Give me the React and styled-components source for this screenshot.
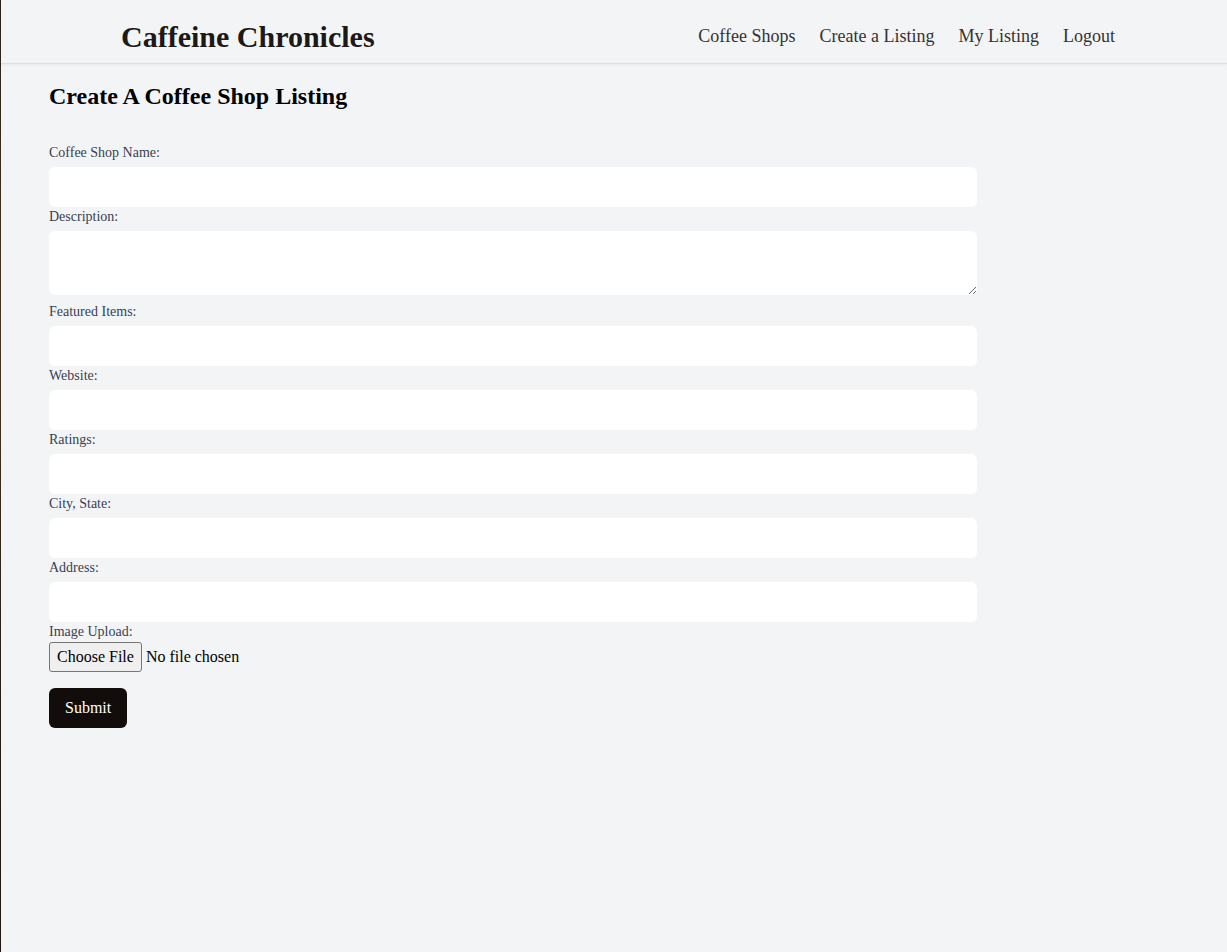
import React from 'react';
import styled, {createGlobalStyle} from 'styled-components';

const GlobalStyle = createGlobalStyle`
    html, body {
        margin:0;
        padding:0;
        background:#f3f4f6;
        font-family:"Liberation Serif", "Times New Roman", serif;
    }
    * { box-sizing:border-box; }
`

const fields = [
    {name:'name', label:'Coffee Shop Name:'},
    {name:'description', label:'Description:', multiline:true},
    {name:'featured', label:'Featured Items:'},
    {name:'website', label:'Website:'},
    {name:'ratings', label:'Ratings:'},
    {name:'location', label:'City, State:'},
    {name:'address', label:'Address:'},
];

const navLinks = ['Coffee Shops','Create a Listing','My Listing','Logout'];

export default function App(){

    function handleSubmit(e){
        e.preventDefault();
    }

    return (
        <Page>
            <GlobalStyle/>
            <Header>
                <Brand>Caffeine Chronicles</Brand>
                <Nav>
                    {navLinks.map(link => <NavLink key={link} href='#'>{link}</NavLink>)}
                </Nav>
            </Header>

            <Main>
                <Title>Create A Coffee Shop Listing</Title>
                <Form onSubmit={handleSubmit}>
                    {fields.map(f => (
                        <Field key={f.name}>
                            <Label htmlFor={f.name}>{f.label}</Label>
                            {f.multiline
                                ? <TextArea id={f.name} name={f.name}/>
                                : <Input id={f.name} name={f.name} type='text'/>}
                        </Field>
                    ))}
                    <Field>
                        <Label htmlFor='image' $tight>Image Upload:</Label>
                        <FileInput id='image' name='image' type='file'/>
                    </Field>
                    <SubmitButton type='submit'>Submit</SubmitButton>
                </Form>
            </Main>
        </Page>
    )
}

const Page = styled.div`
    min-height:100vh;
    border-left:1px solid #3a2a1c;
    border-image:linear-gradient(to bottom, #2c2218, #4a3420 35%, #2a1e16 70%, #1e1612) 1;
`

const Header = styled.header`
    height:64px;
    padding:10px 112px 0 120px;
    display:flex;
    align-items:center;
    justify-content:space-between;
    border-bottom:1px solid #dcdee2;
    box-shadow:0 1px 2px rgba(0,0,0,0.05);
`

const Brand = styled.h1`
    margin:0;
    font-size:30px;
    font-weight:bold;
    color:#1c1917;
    line-height:32px;
`

const Nav = styled.nav`
    display:flex;
    gap:24px;
`

const NavLink = styled.a`
    font-size:18px;
    color:#333;
    text-decoration:none;
    &:hover{
        cursor:pointer;
        text-decoration:underline;
    }
`

const Main = styled.main`
    padding:0 48px;
`

const Title = styled.h2`
    margin:18px 0 35px;
    font-size:24px;
    line-height:28px;
    color:#000;
`

const Form = styled.form`
    display:flex;
    flex-direction:column;
    align-items:flex-start;
`

const Field = styled.div`
    display:flex;
    flex-direction:column;
`

const Label = styled.label`
    display:block;
    font-size:14px;
    line-height:16px;
    color:#374151;
    margin-bottom:${p => p.$tight ? '2px' : '6px'};
`

const Input = styled.input`
    display:block;
    width:928px;
    height:40px;
    border:none;
    border-radius:6px;
    background:#fff;
    padding:0 10px;
    margin-bottom:2px;
    font:inherit;
    font-size:16px;
    &:focus{
        outline:2px solid #a8a29e;
    }
`

const TextArea = styled.textarea`
    display:block;
    width:928px;
    height:64px;
    border:none;
    border-radius:6px;
    background:#fff;
    padding:8px 10px;
    margin-bottom:9px;
    font:inherit;
    font-size:16px;
    resize:both;
    &:focus{
        outline:2px solid #a8a29e;
    }
`

const FileInput = styled.input`
    font-family:"Liberation Serif", "Times New Roman", serif;
    font-size:16px;
    color:#000;
    height:30px;

    &::file-selector-button{
        font:inherit;
        height:30px;
        padding:0 7px;
        margin-right:4px;
        border:1px solid #767676;
        border-radius:3px;
        background:#efefef;
        color:#000;
    }
`

const SubmitButton = styled.button`
    margin-top:16px;
    height:40px;
    padding:0 16px;
    border:none;
    border-radius:6px;
    background:#120d0a;
    color:#fff;
    font-family:"Liberation Serif", "Times New Roman", serif;
    font-size:16px;
    &:hover{
        cursor:pointer;
        background:#2a211b;
    }
`
